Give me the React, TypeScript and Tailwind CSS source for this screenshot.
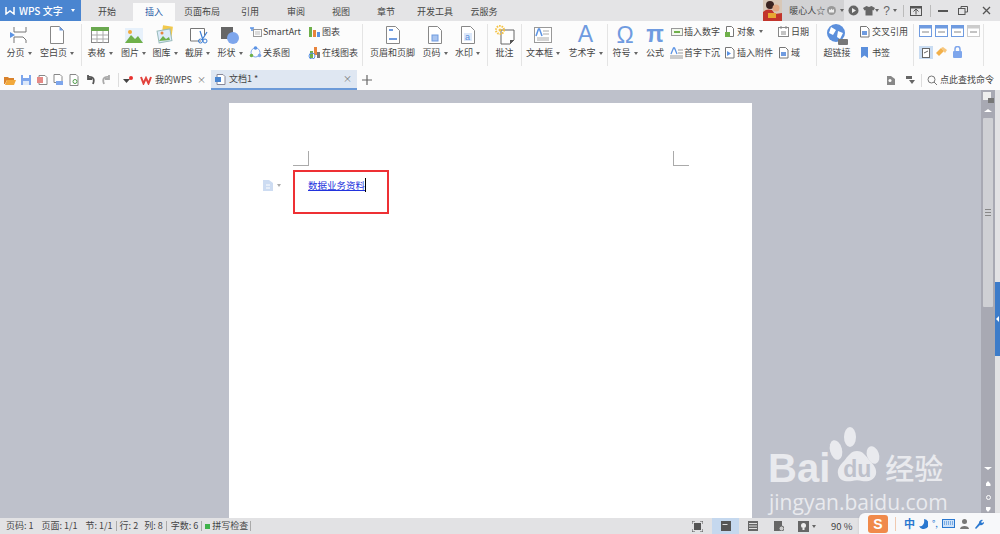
import type { ReactNode } from "react"

const cjk = { fontFamily: '"Noto Sans CJK SC", "Liberation Sans", sans-serif' }

const Caret = () => <span className="ml-[3px] inline-block border-x-[2px] border-t-[3px] border-x-transparent border-t-[#666] align-middle" />

const Sep = () => <div className="h-[42px] w-px shrink-0 bg-[#e4e4e4]" />

function Ico({ size = 24, children }: { size?: number; children: ReactNode }) {
  return (
    <svg width={size} height={size} viewBox={`0 0 ${size} ${size}`} fill="none" className="shrink-0">
      {children}
    </svg>
  )
}

function Big({ w, label, caret, children }: { w: number; label: string; caret?: boolean; children: ReactNode }) {
  return (
    <div className="flex shrink-0 flex-col items-center" style={{ width: w }}>
      <div className="flex h-[22px] items-center justify-center">{children}</div>
      <div className="flex h-[14px] items-center whitespace-nowrap text-[9px] text-[#444]">
        {label}
        {caret && <Caret />}
      </div>
    </div>
  )
}

function Small({ label, caret, children }: { label: string; caret?: boolean; children: ReactNode }) {
  return (
    <div className="flex h-[21px] items-center gap-[1px] whitespace-nowrap text-[9px] text-[#444]">
      <div className="flex w-[14px] shrink-0 justify-center">{children}</div>
      {label}
      {caret && <Caret />}
    </div>
  )
}

const Page = ({ accent = "#6f9be0" }: { accent?: string }) => (
  <Ico size={20}>
    <path d="M3.5 1.5h9l4 4v13h-13z" stroke="#888" fill="#fff" />
    <path d="M12.5 1.5l4 4h-4z" fill={accent} />
  </Ico>
)

const Mini = ({ color = "#6f9be0" }: { color?: string }) => (
  <Ico size={13}>
    <path d="M2.5 1.5h6l2.5 2.5v8h-8.5z" stroke="#777" fill="#fff" />
    <rect x="4" y="6" width="5" height="4" fill={color} />
  </Ico>
)

function Tool({ children }: { children: ReactNode }) {
  return <div className="flex w-[16px] shrink-0 justify-center">{children}</div>
}

function Paw() {
  return (
    <svg width="56" height="56" viewBox="0 0 56 56" fill="#e9eaee">
      <ellipse cx="23" cy="10" rx="6" ry="10" />
      <ellipse cx="9" cy="23" rx="6" ry="10" transform="rotate(-15 9 23)" />
      <ellipse cx="46" cy="28" rx="6" ry="9" transform="rotate(-20 46 28)" />
      <path d="M30 24c6 0 9 5 13 10 4 4 7 8 6 13-2 7-9 8-14 7-3-1-7-1-10 0-6 1-13 0-14-7-1-5 2-9 6-13 4-5 7-10 13-10z" />
    </svg>
  )
}

export default function App() {
  return (
    <div style={cjk} className="relative flex h-[534px] w-[1000px] flex-col overflow-hidden bg-[#bec1cb]">
      {/* title bar */}
      <div className="flex h-[21px] shrink-0 items-stretch bg-[#e4e4e6] text-[9px] text-[#444]">
        <div className="flex w-[81px] items-center bg-[#4a85d0] pl-[5px] text-[10px] font-medium text-white">
          <svg width="10" height="9" viewBox="0 0 10 9" fill="none" stroke="#fff" strokeWidth="1.5"><path d="M1 1v7l4-3 4 3V1" /></svg>
          <span className="ml-[4px]">WPS 文字</span>
          <span className="ml-[8px] border-x-[2px] border-t-[3px] border-x-transparent border-t-white" />
        </div>
        <div className="flex items-end">
          {[
            ["开始", 52, false],
            ["插入", 42, true],
            ["页面布局", 54, false],
            ["引用", 42, false],
            ["审阅", 50, false],
            ["视图", 40, false],
            ["章节", 50, false],
            ["开发工具", 48, false],
            ["云服务", 50, false],
          ].map(([t, w, on]) => (
            <div
              key={t as string}
              style={{ width: w as number }}
              className={on ? "flex h-[18px] items-center justify-center bg-[#fbfbfb] text-[#2b5ea8]" : "flex h-[18px] items-center justify-center"}
            >
              {t}
            </div>
          ))}
        </div>
        <div className="flex-1" />
        <div className="flex h-[21px] w-[19px] overflow-hidden bg-[#b34a3a]">
          <svg width="19" height="21" viewBox="0 0 19 21">
            <rect width="19" height="21" fill="#d8c8b8" />
            <circle cx="7" cy="5" r="4" fill="#3a2320" />
            <circle cx="13" cy="8" r="3.5" fill="#e0a884" />
            <path d="M0 21v-9c3-3 6-3 9-2l3 4 7-1v8z" fill="#c2352c" />
            <path d="M5 13h8v5H5z" fill="#e8a832" />
          </svg>
        </div>
        <div className="flex w-[62px] items-center whitespace-nowrap bg-[#d2d2d4] pl-[7px]">
          暖心人☆
          <svg width="11" height="11" viewBox="0 0 11 11" className="ml-[1px] shrink-0"><circle cx="5.5" cy="5.5" r="4.5" fill="#999" /><path d="M3 7.5V4l1.5 1 1-1.5 1 1.5L8 4v3.5z" fill="#eee" /></svg>
          <Caret />
        </div>
        <div className="flex items-center">
          <svg width="11" height="11" viewBox="0 0 11 11" className="ml-[4px]"><circle cx="5.5" cy="5.5" r="5" fill="#666" /><path d="M4 3l4 2.5L4 8z" fill="#eee" /></svg>
          <svg width="12" height="11" viewBox="0 0 12 11" className="ml-[4px]"><path d="M3.5 1l2.5 1 2.5-1L12 3l-1.5 2.5-1-.5v5.5h-7V5l-1 .5L0 3z" fill="#666" /></svg>
          <span className="border-x-[2px] border-t-[3px] border-x-transparent border-t-[#666]" />
          <span className="ml-[4px] text-[12px] leading-none text-[#666]" style={{ fontFamily: "Liberation Sans" }}>?</span>
          <Caret />
          <div className="ml-[6px] h-[12px] w-px bg-[#bbb]" />
          <svg width="14" height="12" viewBox="0 0 14 12" fill="none" stroke="#555" className="ml-[5px]"><rect x="1.5" y="1.5" width="11" height="9" /><path d="M1.5 2.5h11" strokeWidth="2" /><path d="M7 9.5V4.5M4.5 6.5L7 4l2.5 2.5" /></svg>
          <div className="ml-[7px] h-[12px] w-px bg-[#bbb]" />
          <div className="ml-[7px] h-[2px] w-[10px] bg-[#555]" />
          <svg width="10" height="9" viewBox="0 0 10 9" fill="none" stroke="#555" className="ml-[10px]"><rect x="0.5" y="2.5" width="6.5" height="6" /><path d="M3 2.5V.5h6.5v5.5H7" /></svg>
          <svg width="9" height="9" viewBox="0 0 9 9" stroke="#555" strokeWidth="1.3" className="ml-[14px] mr-[9px]"><path d="M1 1l7 7M8 1L1 8" /></svg>
        </div>
      </div>

      {/* ribbon */}
      <div className="flex h-[49px] shrink-0 items-start bg-[#fcfcfc] pt-[3px]">
        <Big w={38} label="分页" caret>
          <Ico size={20}>
            <path d="M5 2v5h12V2M5 18v-6h9l3 3v3" stroke="#777" fill="#fff" />
            <path d="M1 7l5 3-5 3z" fill="#5b93e4" />
          </Ico>
        </Big>
        <Big w={38} label="空白页" caret><Page /></Big>
        <div className="ml-[5px]"><Sep /></div>
        <Big w={36} label="表格" caret>
          <Ico size={20}>
            <rect x="1.5" y="2.5" width="17" height="15" fill="#fff" stroke="#888" />
            <rect x="1" y="2" width="18" height="4" fill="#6aa84f" />
            <path d="M7 6v12M13 6v12M2 10h16M2 14h16" stroke="#aaa" />
          </Ico>
        </Big>
        <Big w={31} label="图片" caret>
          <Ico size={20}>
            <rect x="1" y="3" width="18" height="15" fill="#e7f1fb" />
            <circle cx="6" cy="7" r="2" fill="#f0a93a" />
            <path d="M1 18l6-8 4 4 3-3 5 7z" fill="#6fb04a" />
          </Ico>
        </Big>
        <Big w={32} label="图库" caret>
          <Ico size={20}>
            <rect x="7" y="1" width="10" height="13" fill="#f2c94c" transform="rotate(8 12 8)" />
            <rect x="3" y="5" width="13" height="12" fill="#dcebfa" stroke="#9bb" transform="rotate(-10 9 11)" />
            <path d="M4 16l4-5 3 3 3-2 1 3z" fill="#6fb04a" />
            <circle cx="7" cy="8" r="1.5" fill="#e8843c" />
          </Ico>
        </Big>
        <Big w={33} label="截屏" caret>
          <Ico size={20}>
            <path d="M13 16H2.5V3.5h14v7" stroke="#777" fill="#fff" />
            <path d="M12 6l3 9M19 7l-5 8" stroke="#3d7fd6" strokeWidth="1.2" />
            <circle cx="12.5" cy="16" r="2" stroke="#3d7fd6" />
            <circle cx="17" cy="16" r="2" stroke="#3d7fd6" />
          </Ico>
        </Big>
        <Big w={32} label="形状" caret>
          <Ico size={20}>
            <rect x="1" y="2" width="12" height="12" fill="#666" />
            <circle cx="13" cy="13" r="6" fill="#7ea6ec" />
          </Ico>
        </Big>
        <div className="-mt-[3px] ml-[2px] flex w-[59px] shrink-0 flex-col">
          <Small label="SmartArt">
            <Ico size={13}><path d="M1 3h4M3 3v3" stroke="#5b93e4" strokeWidth="1.5" /><rect x="4.5" y="4.5" width="8" height="7" stroke="#999" /><path d="M6 7h5M6 9h5" stroke="#bbb" /></Ico>
          </Small>
          <Small label="关系图">
            <Ico size={13}><circle cx="6.5" cy="6.5" r="4.5" stroke="#7ea6ec" /><circle cx="6.5" cy="2" r="1.8" fill="#5b93e4" /><circle cx="2.5" cy="9.5" r="1.8" fill="#6fb04a" /><circle cx="10.5" cy="9.5" r="1.8" fill="#7ea6ec" /></Ico>
          </Small>
        </div>
        <div className="-mt-[3px] flex w-[55px] shrink-0 flex-col">
          <Small label="图表">
            <Ico size={13}><rect x="1" y="2" width="3" height="10" fill="#6fb04a" /><rect x="5" y="5" width="3" height="7" fill="#e8843c" /><rect x="9" y="7" width="3" height="5" fill="#5b93e4" /></Ico>
          </Small>
          <Small label="在线图表">
            <Ico size={13}><rect x="2" y="5" width="3" height="7" fill="#6fb04a" /><rect x="6" y="1" width="3" height="8" fill="#e8843c" /><rect x="9" y="6" width="3" height="6" fill="#777" /><circle cx="4" cy="10" r="3" stroke="#5b93e4" /></Ico>
          </Small>
        </div>
        <Sep />
        <Big w={59} label="页眉和页脚">
          <Ico size={20}><path d="M3.5 1.5h9l4 4v13h-13z" stroke="#888" fill="#fff" /><path d="M6 5h4M6 14h8" stroke="#6f9be0" strokeWidth="2" /></Ico>
        </Big>
        <Big w={26} label="页码" caret>
          <Ico size={20}><path d="M3.5 1.5h9l4 4v13h-13z" stroke="#888" fill="#fff" /><rect x="7" y="10" width="6" height="6" fill="#a9c4ef" stroke="#6f9be0" /></Ico>
        </Big>
        <Big w={39} label="水印" caret>
          <Ico size={20}><path d="M3.5 1.5h9l4 4v13h-13z" stroke="#888" fill="#fff" /><rect x="6" y="8" width="8" height="8" fill="#dce8fa" /><text x="7" y="15" fontSize="9" fill="#5b8fdc" fontFamily="Liberation Sans">a</text></Ico>
        </Big>
        <Sep />
        <Big w={33} label="批注">
          <Ico size={20}>
            <path d="M6 5h13v10l-4 4H6z" fill="#fff" stroke="#666" />
            <path d="M15 19v-4h4z" fill="#555" />
            <circle cx="5" cy="5" r="4" stroke="#f5c242" strokeWidth="2" strokeDasharray="1.5 1" />
            <circle cx="5" cy="5" r="1.5" fill="#f5c242" />
          </Ico>
        </Big>
        <Sep />
        <Big w={42} label="文本框" caret>
          <Ico size={20}>
            <rect x="1.5" y="2.5" width="17" height="15" stroke="#999" fill="#fff" />
            <path d="M3 11l2.5-7h1l2.5 7" stroke="#5b93e4" strokeWidth="1.5" />
            <path d="M10 6h6M10 9h6M4 13h12M4 15h12" stroke="#aaa" />
          </Ico>
        </Big>
        <Big w={43} label="艺术字" caret>
          <span className="-translate-y-[1px] text-[23px] leading-[22px] text-[#6f9be0]" style={{ fontFamily: "Liberation Sans" }}>A</span>
        </Big>
        <Sep />
        <Big w={34} label="符号" caret>
          <span className="text-[23px] leading-[22px] text-[#6f9be0]" style={{ fontFamily: "Liberation Sans" }}>Ω</span>
        </Big>
        <Big w={26} label="公式">
          <span className="-translate-y-[1px] text-[23px] font-bold leading-[22px] text-[#6f9be0]" style={{ fontFamily: "Liberation Sans" }}>π</span>
        </Big>
        <div className="-mt-[3px] ml-[1px] flex w-[53px] shrink-0 flex-col">
          <Small label="插入数字">
            <Ico size={13}><rect x="1.5" y="3.5" width="11" height="7" stroke="#999" fill="#f3f8ee" /><path d="M4 7h6" stroke="#6fb04a" strokeWidth="2" /></Ico>
          </Small>
          <Small label="首字下沉">
            <Ico size={13}><path d="M1 8l2.5-6h1L7 8" stroke="#5b93e4" strokeWidth="1.3" /><path d="M8 4h5M8 7h5M0 10h13M0 12h13" stroke="#999" /></Ico>
          </Small>
        </div>
        <div className="-mt-[3px] flex w-[54px] shrink-0 flex-col">
          <Small label="对象" caret>
            <Ico size={13}><path d="M3.5 1.5h5l2 2v8h-7z" stroke="#777" fill="#fff" /><rect x="2" y="7" width="5" height="5" fill="#6fb04a" /></Ico>
          </Small>
          <Small label="插入附件">
            <Ico size={13}><path d="M2.5 1.5h6l2.5 2.5v8h-8.5z" stroke="#777" fill="#fff" /><path d="M4 5l4 2.5L4 10z" fill="#5b93e4" /></Ico>
          </Small>
        </div>
        <div className="-mt-[3px] flex w-[40px] shrink-0 flex-col">
          <Small label="日期">
            <Ico size={13}><rect x="1.5" y="2.5" width="10" height="9" stroke="#888" fill="#fff" /><path d="M4 1v3M9 1v3M4 7h5M4 9h5" stroke="#888" /></Ico>
          </Small>
          <Small label="域"><Mini /></Small>
        </div>
        <Sep />
        <Big w={40} label="超链接">
          <Ico size={24}><circle cx="11" cy="10" r="9" fill="#5b8fdc" /><path d="M6 4l5 3-3 5-4-2zM13 8l5 2-3 6-3-2z" fill="#fff" /><rect x="13" y="16" width="10" height="6" rx="1" fill="#777" /></Ico>
        </Big>
        <div className="-mt-[3px] flex w-[56px] shrink-0 flex-col">
          <Small label="交叉引用"><Mini /></Small>
          <Small label="书签">
            <Ico size={13}><path d="M3 1h7v11L6.5 9.5 3 12z" fill="#5b8fdc" /></Ico>
          </Small>
        </div>
        <Sep />
        <div className="ml-[5px] mt-[1px] grid w-[64px] shrink-0 grid-cols-4 gap-y-[9px]">
          {["#6f9be0", "#6f9be0", "#6f9be0", "#ccc"].map((c, i) => (
            <svg key={i} width="13" height="12" viewBox="0 0 13 12"><rect x="0.5" y="0.5" width="12" height="11" fill="#fff" stroke={c} /><rect x="1" y="1" width="11" height="2.5" fill={c} /><path d="M3 7h7" stroke="#888" /></svg>
          ))}
          <div className="flex h-[13px] w-[14px] items-center justify-center bg-[#c9dcf2]">
            <svg width="10" height="11" viewBox="0 0 10 11"><rect x="1.5" y="1.5" width="7" height="9" fill="#fff" stroke="#666" /><path d="M3 6l4-2" stroke="#666" /></svg>
          </div>
          <svg width="13" height="12" viewBox="0 0 13 12"><path d="M1 7l5-5 3 3-5 5z" fill="#f2b04a" /><path d="M6 2l2-1 4 3-2 3z" fill="#f7c77e" /></svg>
          <svg width="13" height="12" viewBox="0 0 13 12" fill="none"><rect x="2" y="5" width="9" height="7" rx="1" fill="#7ea6ec" /><path d="M4 5V3a2.5 2.5 0 0 1 5 0v2" stroke="#7ea6ec" strokeWidth="1.5" /></svg>
        </div>
        <Sep />
      </div>

      {/* tab bar */}
      <div className="flex h-[20px] shrink-0 items-stretch bg-[#fcfcfc] text-[9px] text-[#444]">
        <div className="flex w-[135px] shrink-0 items-center pl-[2px]">
          <Tool><svg width="12" height="10" viewBox="0 0 12 10"><path d="M0 2h4l1 1h5v2H3L1 9H0z" fill="#d9822b" /><path d="M3 5h9l-2 5H1z" fill="#f2a93c" /></svg></Tool>
          <Tool><svg width="12" height="12" viewBox="0 0 12 12"><rect x="1" y="1" width="10" height="10" fill="#7ea6ec" /><rect x="3" y="1" width="6" height="3" fill="#fff" /><rect x="3" y="7" width="6" height="4" fill="#dce8fa" /></svg></Tool>
          <Tool><svg width="12" height="12" viewBox="0 0 12 12" fill="none"><path d="M3 1.5h6l2 2v7H3z" stroke="#888" fill="#fff" /><rect x="1" y="3" width="6" height="6" fill="#e58a86" /></svg></Tool>
          <Tool><svg width="12" height="12" viewBox="0 0 12 12" fill="none"><path d="M2 .5h6l2 2v6H2z" stroke="#888" fill="#fff" /><rect x="4" y="7" width="7" height="4" fill="#7ea6ec" /></svg></Tool>
          <Tool><svg width="12" height="12" viewBox="0 0 12 12" fill="none"><path d="M2 .5h6l2 2v9H2z" stroke="#888" fill="#fff" /><circle cx="7" cy="7.5" r="2" stroke="#4f9d4a" /></svg></Tool>
          <Tool><svg width="11" height="10" viewBox="0 0 11 10" fill="none" stroke="#555" strokeWidth="1.8"><path d="M3 2c5-1 7 2 5 7M3 0v4h4" /></svg></Tool>
          <Tool><svg width="11" height="10" viewBox="0 0 11 10" fill="none" stroke="#aaa" strokeWidth="1.8"><path d="M8 2C3 1 1 4 3 9M8 0v4H4" /></svg></Tool>
          <div className="mx-[4px] h-[14px] w-px bg-[#ddd]" />
          <svg width="10" height="8" viewBox="0 0 10 8"><path d="M0 3h7L3.5 7z" fill="#444" /><circle cx="8" cy="2" r="2" fill="#e8302e" /></svg>
        </div>
        <div className="flex w-[76px] shrink-0 items-center pl-[5px]">
          <svg width="12" height="9" viewBox="0 0 12 9" fill="none" stroke="#e2423c" strokeWidth="2"><path d="M1 1l2.5 6.5L6 2l2.5 5.5L11 1" /></svg>
          <span className="ml-[3px]">我的WPS</span>
          <span className="ml-auto mr-[5px] text-[#777]">×</span>
        </div>
        <div className="flex w-[146px] shrink-0 items-center border-b-2 border-[#6c9ad8] bg-[#dfe7f2] pl-[4px]">
          <svg width="11" height="11" viewBox="0 0 11 11" fill="none"><path d="M2 .5h6l2 2v8H2z" stroke="#889" fill="#fff" /><rect x="0" y="3" width="6" height="5" fill="#4a85d0" /></svg>
          <span className="ml-[3px]">文档1 *</span>
          <span className="ml-auto mr-[5px] text-[#777]">×</span>
        </div>
        <svg width="10" height="10" viewBox="0 0 10 10" stroke="#666" strokeWidth="1.2" className="ml-[5px] self-center"><path d="M5 0v10M0 5h10" /></svg>
        <div className="flex-1" />
        <div className="flex items-center pr-[6px]">
          <svg width="8" height="9" viewBox="0 0 8 9" fill="#888"><path d="M0 0h4l4 3v6H0z" /><circle cx="3" cy="4.5" r="1.5" fill="#fff" /></svg>
          <svg width="9" height="8" viewBox="0 0 9 8" fill="#666" className="ml-[11px]"><path d="M0 0h6v3H0zM3 4h6L6 8z" /></svg>
          <div className="ml-[6px] mr-[5px] h-[13px] w-px bg-[#ddd]" />
          <svg width="10" height="10" viewBox="0 0 10 10" fill="none" stroke="#777"><circle cx="4.5" cy="4.5" r="3.5" /><path d="M7 7l3 3" /></svg>
          <span className="ml-[3px]">点此查找命令</span>
        </div>
      </div>

      {/* document area */}
      <div className="flex min-h-0 flex-1 overflow-hidden">
        <div className="flex flex-1 justify-center pt-[13px]">
          <div className="h-[460px] w-[523px] bg-white pl-[64px] pr-[63px] pt-[48px]">
            <div className="flex justify-between">
              <div className="h-[15px] w-[16px] border-b border-r border-[#aaa]" />
              <div className="h-[15px] w-[16px] border-b border-l border-[#aaa]" />
            </div>
            <div className="-ml-[30px] mt-[4px] flex items-start">
              <div className="flex w-[30px] items-center pt-[10px]">
                <svg width="10" height="11" viewBox="0 0 10 11"><path d="M0 0h6l4 3v8H0z" fill="#cddcf2" /><path d="M3 5h4M3 8h4" stroke="#fff" /></svg>
                <span className="ml-[4px] border-x-[2px] border-t-[3px] border-x-transparent border-t-[#aaa]" />
              </div>
              <div className="h-[44px] w-[96px] border-2 border-[#ee3034] pl-[13px] pt-[6px] text-[9.5px] leading-[15px]">
                <span className="border-r border-black text-[#2233dd] underline">数据业务资料</span>
              </div>
            </div>
          </div>
        </div>
        <div className="flex w-[14px] shrink-0 flex-col items-center bg-[#a8a9b3]">
          <svg width="11" height="11" viewBox="0 0 11 11" className="mt-[2px]"><rect width="8" height="8" fill="#eee" /><path d="M5 11V6h6v5z" fill="#777" /></svg>
          <div className="mt-[6px] border-x-[4px] border-b-[3px] border-x-transparent border-b-white" />
          <div className="mt-[6px] flex h-[189px] w-[10px] flex-col items-center justify-center gap-[2px] rounded-[1px] bg-[#cfd0d4]">
            <div className="h-px w-[6px] bg-[#888]" />
            <div className="h-px w-[6px] bg-[#888]" />
            <div className="h-px w-[6px] bg-[#888]" />
          </div>
          <div className="flex-1" />
          <div className="mb-[11px] border-x-[4px] border-t-[3px] border-x-transparent border-t-white" />
          <div className="mb-[9px] h-[5px] w-[5px] bg-white [clip-path:polygon(50%_0,100%_60%,100%_100%,0_100%,0_60%)]" />
          <div className="mb-[7px] h-[5px] w-[5px] rounded-full border border-white" />
          <div className="mb-[6px] h-[5px] w-[5px] bg-white [clip-path:polygon(0_0,100%_0,100%_40%,50%_100%,0_40%)]" />
        </div>
        <div className="flex w-[5px] shrink-0 flex-col bg-[#e2e2e4] pt-[192px]">
          <div className="flex h-[74px] items-center justify-center bg-[#3d7cc9]">
            <div className="border-y-[3px] border-r-[3px] border-y-transparent border-r-white" />
          </div>
        </div>
      </div>

      {/* status bar */}
      <div className="flex h-[16px] shrink-0 items-center bg-[#e2e2e4] pl-[6px] text-[9px] text-[#444]">
        <span>页码: 1</span>
        <span className="ml-[8px]">页面: 1/1</span>
        <span className="ml-[8px]">节: 1/1</span>
        <span className="mx-[3px] h-[10px] w-px bg-[#aaa]" />
        <span>行: 2</span>
        <span className="ml-[6px]">列: 8</span>
        <span className="mx-[3px] h-[10px] w-px bg-[#aaa]" />
        <span className="ml-[1px]">字数: 6</span>
        <span className="mx-[3px] h-[10px] w-px bg-[#aaa]" />
        <span className="h-[5px] w-[5px] bg-[#3fb24a]" />
        <span className="ml-[2px]">拼写检查</span>
        <span className="ml-[2px] h-[10px] w-px bg-[#aaa]" />
        <div className="flex-1" />
        <div className="flex w-[318px] shrink-0 items-stretch self-stretch">
          <div className="flex w-[30px] items-center justify-center">
            <svg width="11" height="11" viewBox="0 0 11 11"><rect x="2" y="2" width="7" height="7" fill="#555" /><path d="M0 3V0h3M8 0h3v3M11 8v3H8M3 11H0V8" fill="none" stroke="#555" /></svg>
          </div>
          <div className="flex w-[27px] items-center justify-center bg-[#c5d8ee]">
            <svg width="10" height="10" viewBox="0 0 10 10"><rect width="10" height="10" fill="#555" /><rect x="1.5" y="3" width="5" height="1" fill="#ddd" /></svg>
          </div>
          <div className="flex w-[27px] items-center justify-center">
            <svg width="10" height="10" viewBox="0 0 10 10"><rect width="10" height="10" fill="#666" /><path d="M1 2.5h8M1 5h8M1 7.5h8" stroke="#ddd" /></svg>
          </div>
          <div className="flex w-[26px] items-center justify-center">
            <svg width="10" height="10" viewBox="0 0 10 10"><rect width="8" height="10" fill="#666" /><circle cx="7.5" cy="7.5" r="2.5" fill="#ccc" stroke="#666" /></svg>
          </div>
          <div className="flex w-[30px] items-center justify-center">
            <svg width="11" height="11" viewBox="0 0 11 11"><rect width="11" height="11" fill="#666" /><circle cx="5.5" cy="4.5" r="2.5" fill="#eee" /><rect x="4.5" y="7" width="2" height="2" fill="#eee" /></svg>
            <Caret />
          </div>
          <span className="ml-[9px] self-center whitespace-nowrap text-[9.5px]">90 %</span>
        </div>
      </div>

      {/* baidu watermark */}
      <div className="pointer-events-none absolute left-[768px] top-[427px] w-[210px] text-[#e9eaee]">
        <div className="flex items-end" style={{ fontFamily: "Liberation Sans" }}>
          <span className="-mb-[4px] text-[40px] font-bold leading-[38px]">Bai</span>
          <div className="relative -ml-[3px]">
            <Paw />
            <span className="absolute left-[16px] top-[31px] text-[23px] font-bold leading-none text-[#bec1cb]">du</span>
          </div>
          <span className="-mb-[2px] ml-[2px] text-[29px] font-medium leading-[36px]" style={cjk}>经验</span>
        </div>
        <div className="mt-[7px] pl-[1px] text-[21px] leading-[24px]" style={{ fontFamily: "Open Sans" }}>jingyan.baidu.com</div>
      </div>

      {/* sogou ime bar */}
      <div className="absolute bottom-0 left-[859px] flex h-[21px] w-[141px] items-center rounded-tl-[6px] bg-[#f7f8fa] shadow-sm">
        <div className="ml-[9px] flex h-[18px] w-[20px] items-center justify-center rounded-[3px] bg-[#f08a4b] text-[14px] font-bold leading-none text-white" style={{ fontFamily: "Liberation Sans" }}>S</div>
        <div className="ml-[7px] h-[14px] w-px bg-[#f0c9b0]" />
        <span className="ml-[8px] text-[11px] font-bold text-[#2a78d0]">中</span>
        <svg width="9" height="10" viewBox="0 0 9 10" className="ml-[4px]"><path d="M5 0a5 5 0 1 1-5 7c3 1 6-2 5-7z" fill="#2a78d0" /></svg>
        <span className="ml-[4px] text-[9px] leading-none text-[#2a78d0]">°,</span>
        <svg width="13" height="9" viewBox="0 0 13 9" className="ml-[4px]"><rect x="0.5" y="0.5" width="12" height="8" fill="#cfe2f8" stroke="#2a78d0" /><path d="M2 3h9M2 5h9" stroke="#2a78d0" strokeDasharray="1 1" /></svg>
        <svg width="9" height="10" viewBox="0 0 9 10" className="ml-[5px]"><circle cx="4.5" cy="2.5" r="2.5" fill="#777" /><path d="M0 10c0-4 9-4 9 0z" fill="#777" /></svg>
        <svg width="10" height="10" viewBox="0 0 10 10" className="ml-[5px]"><path d="M1 9l4-5a3 3 0 0 1 4-3L7 3l1 1 2-1a3 3 0 0 1-4 3l-4 4z" fill="#2a78d0" /></svg>
      </div>
    </div>
  )
}
